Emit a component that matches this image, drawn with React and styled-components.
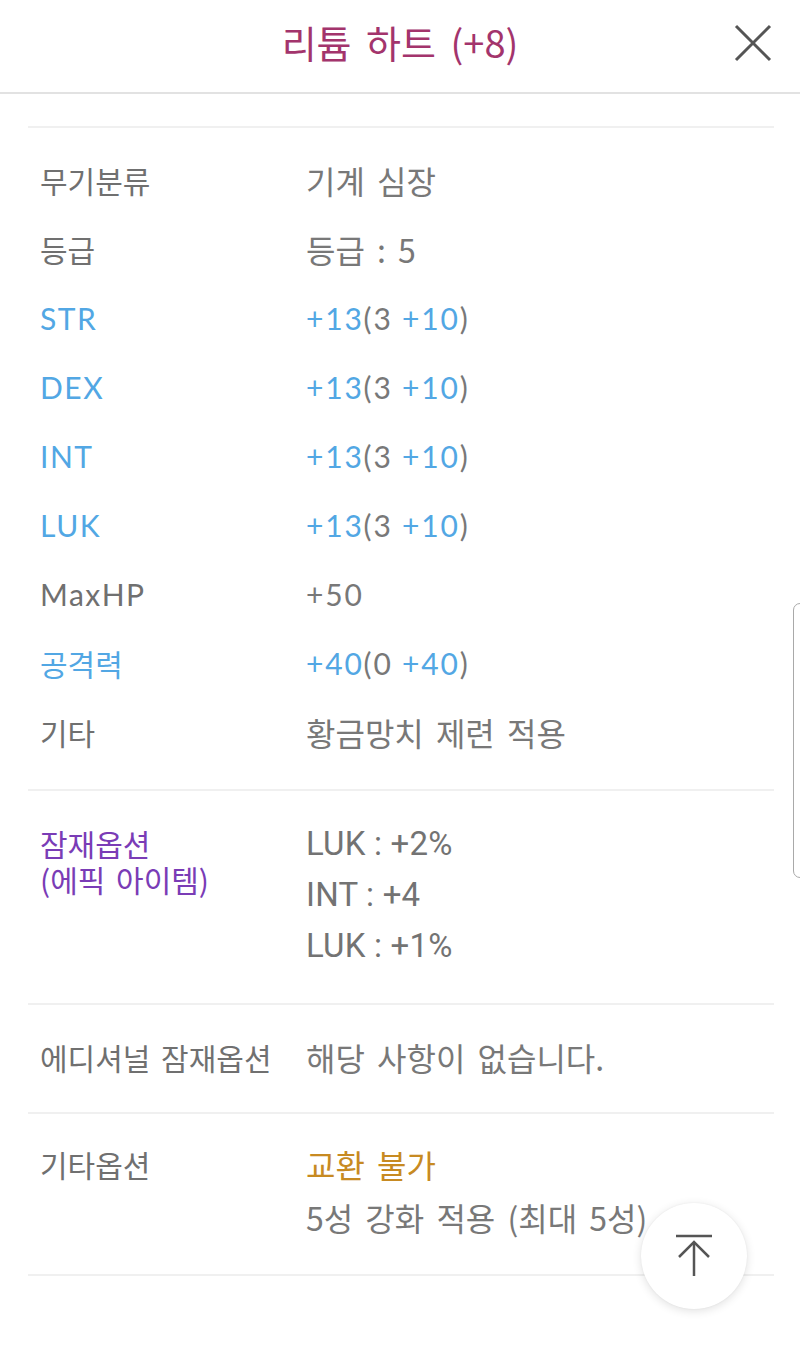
import React from 'react';
import styled, { createGlobalStyle } from 'styled-components';

const GlobalStyle = createGlobalStyle`
  html, body {
    margin: 0;
    padding: 0;
    background: #ffffff;
  }
  body {
    font-family: "Noto Sans CJK KR", sans-serif;
  }
`;

const Page = styled.div`
  position: relative;
  width: 800px;
  min-height: 1365px;
  background: #ffffff;
  overflow: hidden;
`;

const Header = styled.header`
  position: relative;
  height: 92px;
  display: flex;
  align-items: center;
  justify-content: center;
  border-bottom: 2px solid #e2e2e2;
`;

const Title = styled.h1`
  margin: 0 0 10px;
  font-family: "Noto Sans CJK KR", sans-serif;
  font-size: 38px;
  font-weight: 400;
  color: #a3346c;
  word-spacing: 6px;
`;

const CloseButton = styled.button`
  position: absolute;
  right: 28px;
  top: 24px;
  width: 38px;
  height: 38px;
  padding: 0;
  border: none;
  background: none;
  cursor: pointer;
  color: #555555;
`;

const Content = styled.main`
  padding: 32px 26px 0 28px;
`;

const Section = styled.section`
  border-top: 2px solid #f0f0f0;
  padding: ${props => props.$pad || '18px 0 20px'};
  &:last-child {
    border-bottom: 2px solid #f0f0f0;
  }
`;

const Row = styled.div`
  display: grid;
  grid-template-columns: 266px 1fr;
  padding-left: 12px;
  min-height: 69px;
  align-items: ${props => (props.$top ? 'start' : 'center')};
`;

const Label = styled.div`
  font-family: ${props => (props.$latin ? 'Lato, ' : '')}"Noto Sans CJK KR", sans-serif;
  font-size: ${props => (props.$latin ? '30px' : '30px')};
  font-weight: 400;
  letter-spacing: ${props => (props.$latin ? '1.5px' : '0')};
  word-spacing: 4px;
  line-height: ${props => props.$lh || '69px'};
  padding-top: ${props => props.$offset || '0'};
  color: ${props => props.$color || '#707070'};
  white-space: nowrap;
`;

const Value = styled.div`
  font-family: ${props => (props.$latin ? 'Lato, ' : '')}"Noto Sans CJK KR", sans-serif;
  font-size: ${props => (props.$latin ? '30px' : '32px')};
  font-weight: 400;
  letter-spacing: ${props => (props.$latin ? '1.8px' : '0')};
  word-spacing: ${props => (props.$latin ? '0' : '5px')};
  line-height: ${props => props.$lh || '69px'};
  color: #787878;
  white-space: nowrap;
`;

const Line = styled.div`
  color: ${props => props.$color || 'inherit'};
`;

const Blue = styled.span`
  color: #52a7e4;
`;

const Potential = styled.div`
  font-family: Roboto, "Noto Sans CJK KR", sans-serif;
  font-size: 33px;
  font-weight: 400;
  line-height: 51px;
  color: #737373;
  letter-spacing: 0.2px;
`;

const TopButton = styled.button`
  position: absolute;
  left: 641px;
  top: 1203px;
  width: 106px;
  height: 106px;
  border-radius: 50%;
  border: none;
  background: #ffffff;
  box-shadow: 0 2px 10px rgba(0, 0, 0, 0.12), 0 0 2px rgba(0, 0, 0, 0.06);
  display: flex;
  align-items: center;
  justify-content: center;
  cursor: pointer;
  color: #555555;
  padding: 0;
`;

const EdgeHandle = styled.div`
  position: absolute;
  left: 793px;
  top: 603px;
  width: 14px;
  height: 275px;
  border: 1.5px solid #a9a9a9;
  border-radius: 9px;
  box-sizing: border-box;
`;

const stats = [
  { label: 'STR', total: '+13', base: '3', bonus: '+10' },
  { label: 'DEX', total: '+13', base: '3', bonus: '+10' },
  { label: 'INT', total: '+13', base: '3', bonus: '+10' },
  { label: 'LUK', total: '+13', base: '3', bonus: '+10' },
];

function StatValue({ total, base, bonus }) {
  return (
    <Value $latin>
      <Blue>{total}</Blue>({base} <Blue>{bonus}</Blue>)
    </Value>
  );
}

export default function App() {
  return (
    <Page>
      <GlobalStyle />
      <Header>
        <Title>리튬 하트 (+8)</Title>
        <CloseButton aria-label="닫기">
          <svg width="38" height="38" viewBox="0 0 38 38" fill="none" stroke="currentColor" strokeWidth="3">
            <path d="M2 2 L36 36 M36 2 L2 36" />
          </svg>
        </CloseButton>
      </Header>

      <Content>
        <Section $pad="18px 0 22px">
          <Row>
            <Label>무기분류</Label>
            <Value>기계 심장</Value>
          </Row>
          <Row>
            <Label>등급</Label>
            <Value>등급 : 5</Value>
          </Row>
          {stats.map(s => (
            <Row key={s.label}>
              <Label $latin $color="#52a7e4">{s.label}</Label>
              <StatValue {...s} />
            </Row>
          ))}
          <Row>
            <Label $latin>MaxHP</Label>
            <Value $latin>+50</Value>
          </Row>
          <Row>
            <Label $color="#52a7e4">공격력</Label>
            <StatValue total="+40" base="0" bonus="+40" />
          </Row>
          <Row>
            <Label>기타</Label>
            <Value>황금망치 제련 적용</Value>
          </Row>
        </Section>

        <Section $pad="27px 0 32px">
          <Row $top>
            <Label $color="#7a3cb6" $lh="36px" $offset="7px">
              잠재옵션
              <br />
              (에픽 아이템)
            </Label>
            <div>
              <Potential>LUK : +2%</Potential>
              <Potential>INT : +4</Potential>
              <Potential>LUK : +1%</Potential>
            </div>
          </Row>
        </Section>

        <Section>
          <Row>
            <Label>에디셔널 잠재옵션</Label>
            <Value>해당 사항이 없습니다.</Value>
          </Row>
        </Section>

        <Section $pad="24px 0 30px">
          <Row $top>
            <Label $lh="53px">기타옵션</Label>
            <Value $lh="53px">
              <Line $color="#c78a22">교환 불가</Line>
              <Line>5성 강화 적용 (최대 5성)</Line>
            </Value>
          </Row>
        </Section>
      </Content>

      <TopButton aria-label="맨 위로">
        <svg width="40" height="44" viewBox="0 0 40 44" fill="none" stroke="currentColor" strokeWidth="2.5">
          <path d="M2 2 H38" />
          <path d="M20 8 V42" />
          <path d="M5 23 L20 8 L35 23" />
        </svg>
      </TopButton>
      <EdgeHandle />
    </Page>
  );
}
